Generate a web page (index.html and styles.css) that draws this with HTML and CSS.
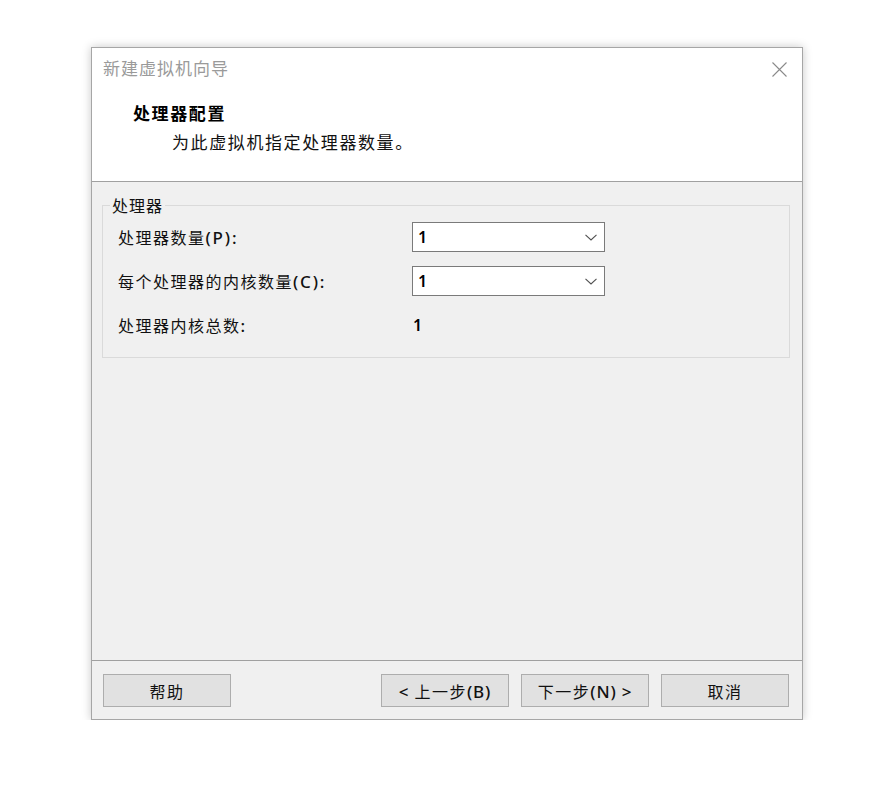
FILE: index.html
```html
<!DOCTYPE html>
<html lang="zh-CN">
<head>
<meta charset="utf-8">
<title>新建虚拟机向导</title>
<link rel="stylesheet" href="styles.css">
</head>
<body>
<div class="dialog">
  <div class="header">
    <div class="titlebar">
      <span class="title">新建虚拟机向导</span>
      <span class="close" aria-label="关闭">
        <svg width="15" height="15" viewBox="0 0 15 15"><path d="M0.5 0.5 L14.5 14.5 M14.5 0.5 L0.5 14.5" stroke="#8a8a8a" stroke-width="1.1" fill="none"/></svg>
      </span>
    </div>
    <div class="page-title">处理器配置</div>
    <div class="page-sub">为此虚拟机指定处理器数量。</div>
  </div>
  <div class="content">
    <fieldset class="group">
      <legend class="legend">处理器</legend>
      <div class="rows">
        <div class="label">处理器数量<span class="latin">(P):</span></div>
        <div class="select"><span class="val">1</span>
          <svg class="chev" width="12" height="7" viewBox="0 0 12 7"><path d="M0.5 0.8 L6 6 L11.5 0.8" stroke="#505050" stroke-width="1.1" fill="none"/></svg>
        </div>
        <div class="label">每个处理器的内核数量<span class="latin">(C):</span></div>
        <div class="select"><span class="val">1</span>
          <svg class="chev" width="12" height="7" viewBox="0 0 12 7"><path d="M0.5 0.8 L6 6 L11.5 0.8" stroke="#505050" stroke-width="1.1" fill="none"/></svg>
        </div>
        <div class="label">处理器内核总数<span class="latin">:</span></div>
        <div class="plain"><span class="val">1</span></div>
      </div>
    </fieldset>
  </div>
  <div class="footer">
    <button class="btn">帮助</button>
    <div class="spacer"></div>
    <button class="btn"><span class="latin">&lt;</span> 上一步<span class="latin">(B)</span></button>
    <button class="btn">下一步<span class="latin">(N) &gt;</span></button>
    <button class="btn">取消</button>
  </div>
</div>
</body>
</html>
```

FILE: styles.css
```css
html, body {
  margin: 0;
  padding: 0;
  background: #ffffff;
}
body {
  padding: 47px 0 0 91px;
  font-family: "Noto Sans CJK SC", "Noto Sans", sans-serif;
  color: #000;
}
.dialog {
  width: 710px;
  height: 671px;
  border: 1px solid #a6a6a6;
  box-shadow: 0 0 9px rgba(0, 0, 0, 0.22);
  background: #f0f0f0;
  display: flex;
  flex-direction: column;
}
.header {
  height: 133px;
  background: #ffffff;
  border-bottom: 1px solid #a0a0a0;
  box-sizing: content-box;
}
.titlebar {
  display: flex;
  align-items: center;
  justify-content: space-between;
  height: 24px;
  margin-top: 8px;
  padding: 0 15px 0 11px;
}
.title {
  font-size: 17px;
  letter-spacing: 1px;
  color: #9a9a9a;
  line-height: 24px;
}
.close {
  display: flex;
  width: 15px;
  height: 15px;
  margin-top: 2px;
}
.page-title {
  margin-top: 21px;
  margin-left: 41px;
  font-size: 17px;
  font-weight: bold;
  letter-spacing: 1.6px;
  line-height: 24px;
}
.page-sub {
  margin-top: 5px;
  margin-left: 80px;
  font-size: 17px;
  letter-spacing: 1.6px;
  line-height: 24px;
  color: #111;
}
.content {
  flex: 1;
  padding: 13px 12px 0 10px;
}
.group {
  margin: 0;
  padding: 0 0 17px 0;
  border: 1px solid #dadada;
  min-width: 0;
}
.legend {
  margin-left: 7px;
  padding: 0 2px;
  font-size: 16px;
  letter-spacing: 1px;
  line-height: 20px;
  color: #111;
}
.rows {
  display: grid;
  grid-template-columns: 294px 193px;
  grid-auto-rows: 30px;
  row-gap: 14px;
  padding: 7px 0 0 15px;
  align-items: center;
}
.label {
  font-size: 16px;
  letter-spacing: 1.5px;
  line-height: 24px;
  color: #111;
}
.latin {
  letter-spacing: 1.8px;
  font-family: "Noto Sans", "Noto Sans CJK SC", sans-serif;
  font-size: 17px;
  font-weight: 500;
}
.select {
  height: 30px;
  box-sizing: border-box;
  border: 1px solid #7a7a7a;
  background: #ffffff;
  display: flex;
  align-items: center;
  justify-content: space-between;
  padding: 0 7px 0 5px;
}
.val {
  font-family: "Noto Sans", sans-serif;
  font-size: 16px;
  font-weight: 600;
  line-height: 20px;
}
.plain {
  padding-left: 1px;
  display: flex;
  align-items: center;
  height: 30px;
}
.chev {
  display: block;
}
.footer {
  border-top: 1px solid #a0a0a0;
  display: flex;
  gap: 12px;
  padding: 13px 13px 12px 11px;
}
.spacer {
  flex: 1;
}
.btn {
  width: 128px;
  height: 33px;
  margin: 0;
  padding: 0;
  border: 1px solid #adadad;
  background: #e1e1e1;
  font-family: "Noto Sans CJK SC", "Noto Sans", sans-serif;
  font-size: 16px;
  letter-spacing: 1.5px;
  color: #111;
}
.btn .latin {
  font-size: 17px;
  letter-spacing: 0.8px;
}
```
